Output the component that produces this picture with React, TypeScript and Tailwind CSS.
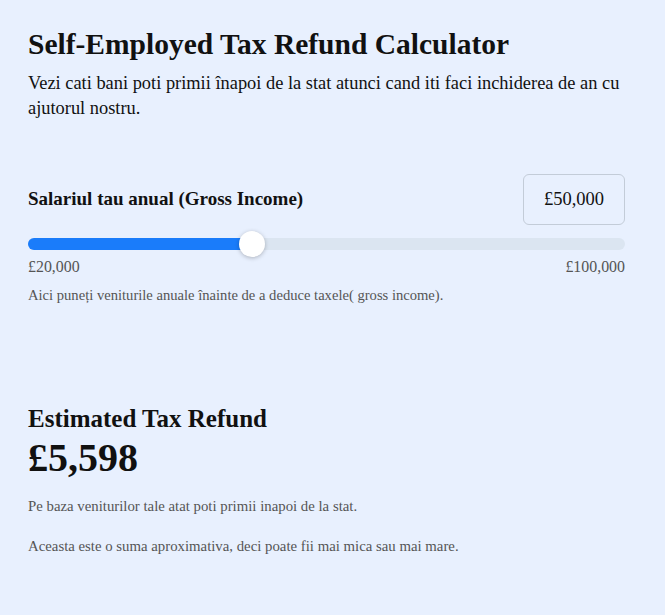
import React, { useState } from 'react'

// Limites du slider
const MIN = 20000
const MAX = 100000

const fmt = (n: number) => '£' + n.toLocaleString('en-GB')

export default function App() {
  const [income, setIncome] = useState(50000)
  const pct = ((income - MIN) / (MAX - MIN)) * 100

  return (
    <div
      className="min-h-[615px] w-full bg-[#e8f0fe] text-[#111]"
      style={{ fontFamily: '"Liberation Serif", "Times New Roman", serif' }}
    >
      <div className="w-[597px] ml-7 pt-[27px]">
        {/* Titre */}
        <h1 className="text-[29.5px] font-bold leading-[34px]">Self-Employed Tax Refund Calculator</h1>
        <p className="mt-[10px] text-[18.4px] leading-[25px]">
          Vezi cati bani poti primii înapoi de la stat atunci cand iti faci inchiderea de an cu ajutorul nostru.
        </p>

        {/* Salaire + valeur */}
        <div className="mt-[53px] flex items-center justify-between">
          <span className="text-[19px] font-bold">Salariul tau anual (Gross Income)</span>
          <div className="w-[102px] h-[51px] flex items-center justify-center rounded-md border border-[#c3ccd8] text-[18.5px]">
            {fmt(income)}
          </div>
        </div>

        {/* Slider */}
        <div className="relative mt-[13px] h-[12px] rounded-full bg-[#dbe5f1]">
          <div className="absolute left-0 top-0 h-full rounded-full bg-[#1a7cfa]" style={{ width: pct + '%' }} />
          <div
            className="absolute top-1/2 w-[26px] h-[26px] -translate-x-1/2 -translate-y-1/2 rounded-full bg-white shadow-[0_1px_4px_rgba(0,0,0,0.25)]"
            style={{ left: pct + '%' }}
          />
          <input
            type="range"
            min={MIN}
            max={MAX}
            step={1000}
            value={income}
            onChange={e => setIncome(Number(e.target.value))}
            className="absolute inset-0 w-full opacity-0 cursor-pointer"
          />
        </div>
        <div className="mt-[8px] flex justify-between text-[15.9px] leading-[18px] text-[#555]">
          <span>£20,000</span>
          <span>£100,000</span>
        </div>
        <p className="mt-[10px] text-[14.6px] leading-[18px] text-[#555]">
          Aici puneți veniturile anuale înainte de a deduce taxele( gross income).
        </p>

        {/* Résultat */}
        <h2 className="mt-[100px] text-[25px] font-bold leading-[30px]">Estimated Tax Refund</h2>
        <div className="text-[40px] font-bold leading-[48px]">£5,598</div>
        <p className="mt-[15px] text-[14.8px] leading-[18px] text-[#555]">
          Pe baza veniturilor tale atat poti primii inapoi de la stat.
        </p>
        <p className="mt-[22px] text-[14.8px] leading-[18px] text-[#555]">
          Aceasta este o suma aproximativa, deci poate fii mai mica sau mai mare.
        </p>
      </div>
    </div>
  )
}
